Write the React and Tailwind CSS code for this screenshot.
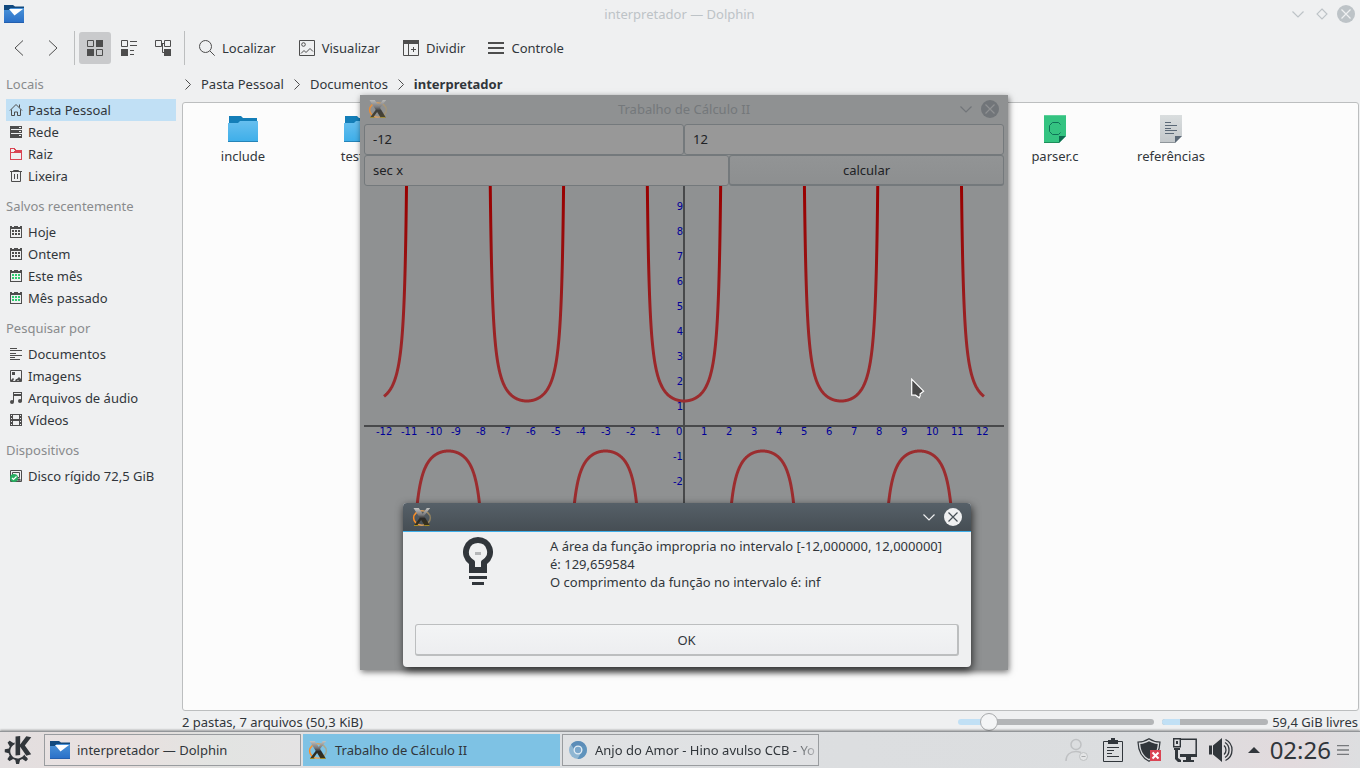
import React from "react";
import { SiKde } from "react-icons/si";

const INK = "#4d4d4d";

/* ---------- small 16px icons ---------- */

function Icon({ size = 16, children, className = "" }) {
  return (
    <svg width={size} height={size} viewBox={`0 0 ${size} ${size}`} fill="none" className={`shrink-0 ${className}`} aria-hidden="true">
      {children}
    </svg>
  );
}

const HomeIcon = () => (
  <Icon>
    <path d="M2 8.500 8 2.500l6 6M3.500 7.500v6h3v-3.500h3v3.500h3v-6M11.500 2.500v3" stroke={INK} />
  </Icon>
);
const NetworkIcon = () => (
  <Icon>
    <g shapeRendering="crispEdges">
      <path d="M2 2h12v12H2z" fill={INK} />
      <path d="M3 5h11v1H3zM3 9h11v1H3zM11 3h2v1h-2zM11 7h2v1h-2zM11 11h2v1h-2z" fill="#eff0f1" />
    </g>
  </Icon>
);
const RootIcon = () => (
  <Icon>
    <g shapeRendering="crispEdges" fill="#da4453">
      <path d="M2 2h5v1h1v1h6v10H2zM3 7v6h10V7z" fillRule="evenodd" />
      <path d="M3 3h3v1h1v1H6v1H3z" fill="#eff0f1" />
    </g>
  </Icon>
);
const TrashIcon = () => (
  <Icon>
    <path d="M2 3.500h12M5.500 3V2.500h5V3M3.500 4v9.500h9V4M6.500 6v5M9.500 6v5" stroke={INK} />
  </Icon>
);
const CalendarIcon = ({ dots = INK }) => (
  <Icon>
    <g shapeRendering="crispEdges">
      <path d="M2 2h2v1h2V2h4v1h2V2h2v12H2zM3 5v8h10V5z" fill={INK} fillRule="evenodd" />
      <path d="M4 6h2v2H4zM7 6h2v2H7zM10 6h2v2h-2zM4 9h2v2H4zM7 9h2v2H7zM10 9h2v2h-2z" fill={dots} />
    </g>
  </Icon>
);
const DocIcon = () => (
  <Icon>
    <path d="M2 2.500h7M2 4.500h12M2 7.500h6M2 9.500h12M2 11.500h5M2 13.500h10" stroke={INK} shapeRendering="crispEdges" />
  </Icon>
);
const ImageIcon = () => (
  <Icon>
    <path d="M2.500 2.500h11v11h-11z" stroke={INK} />
    <path d="M4 4h3v3H4zM3 13v-1l2-2 1 1-1 2zM7 13l1-2 1 0 2-2 2 2v2h-2l-1-1-1 1z" fill={INK} />
  </Icon>
);
const MusicIcon = () => (
  <Icon>
    <path d="M5 2h9v9.500h-1V6H6v6H5z" fill={INK} />
    <path d="M6 3h7v1H6z" fill="#eff0f1" />
    <circle cx="4" cy="12" r="2" fill={INK} />
    <circle cx="12" cy="11" r="2" fill={INK} />
  </Icon>
);
const VideoIcon = () => (
  <Icon>
    <g shapeRendering="crispEdges">
      <path d="M2 2h12v12H2z" fill={INK} />
      <path d="M5 3h6v4H5zM5 9h6v4H5zM3 3h1v1H3zM3 6h1v1H3zM3 9h1v1H3zM3 12h1v1H3zM12 3h1v1h-1zM12 6h1v1h-1zM12 9h1v1h-1zM12 12h1v1h-1z" fill="#eff0f1" />
    </g>
  </Icon>
);
const DiskIcon = () => (
  <Icon>
    <path d="M2.500 2.500h11v11h-11z" stroke={INK} />
    <path d="M4.500 4.500h7v5h-7zM8 11.500h4" stroke={INK} />
    <path d="M7 7.500h2M10 11h2v2h-2z" stroke={INK} />
    <circle cx="6" cy="10" r="4" fill="#27ae60" />
    <path d="m4 10 1.500 1.500L8.500 8.500" stroke="#fff" strokeWidth="1.200" />
  </Icon>
);

/* ---------- toolbar icons ---------- */

const BackIcon = () => (
  <Icon>
    <path d="m12 .5-8 7.500 8 7.500" stroke={INK} />
  </Icon>
);
const ForwardIcon = () => (
  <Icon>
    <path d="m4 .5 8 7.500-8 7.500" stroke={INK} />
  </Icon>
);
const GridIcon = () => (
  <Icon>
    <path d="M.5.500h6v6h-6zM9.500 9.500h6v6h-6z" stroke={INK} />
    <path d="M9 0h7v7H9zM0 9h7v7H0z" fill={INK} />
  </Icon>
);
const CompactIcon = () => (
  <Icon>
    <path d="M.5.500h6v6h-6zM9 1.500h7M9 5.500h7M9 10.500h4M9 14.500h4" stroke={INK} />
    <path d="M0 9h7v7H0z" fill={INK} />
  </Icon>
);
const TreeIcon = () => (
  <Icon>
    <path d="M.5.500h6v6h-6zM9.500.500h6v6h-6zM7 3.500h2.500M7.500 4v8.500H9" stroke={INK} />
    <path d="M9 9h7v7H9z" fill={INK} />
  </Icon>
);
const SearchIcon = () => (
  <Icon>
    <circle cx="6.500" cy="6.500" r="6" stroke={INK} />
    <path d="m11 11 4.700 4.700" stroke={INK} />
  </Icon>
);
const PreviewIcon = () => (
  <Icon>
    <path d="M.5.500h15v15H.5zM2 13.500l3-3 2 2L11 8.500l3 3" stroke={INK} />
    <circle cx="4.500" cy="4.500" r="1.800" stroke={INK} />
  </Icon>
);
const SplitIcon = () => (
  <Icon>
    <path d="M.5 1h15v14.500H.5zM5.500 3v13M8 9.500h5M10.500 7v5" stroke={INK} />
    <path d="M0 0h16v4H0z" fill={INK} />
  </Icon>
);
const MenuIcon = () => (
  <Icon>
    <path d="M0 2h16v2H0zM0 7h16v2H0zM0 12h16v2H0z" fill={INK} />
  </Icon>
);
const Crumb = () => (
  <svg width="6" height="11" viewBox="0 0 6 11" fill="none" aria-hidden="true">
    <path d="m.5.500 5 5-5 5" stroke={INK} />
  </svg>
);

/* ---------- logos and file pictures ---------- */

const DolphinLogo = ({ className }) => (
  <svg viewBox="0 0 20 18" className={className} aria-hidden="true">
    <defs>
      <linearGradient id="dolphin" x1="0" y1="0" x2="0" y2="1">
        <stop offset="0" stopColor="#4a92d8" />
        <stop offset="1" stopColor="#2a70c8" />
      </linearGradient>
    </defs>
    <path d="M0 0h9l2 1.500h9V8H0z" fill="#11497e" />
    <path d="M0 5h5l1.500-2H20v14.500H0z" fill="url(#dolphin)" />
    <path d="M0 17h20v1H0z" fill="#245fae" />
    <path d="M5 4h14l-8.500 6.500z" fill="#fff" />
  </svg>
);

const XLogo = ({ id, className = "" }) => (
  <svg width="20" height="20" viewBox="0 0 20 20" className={`shrink-0 ${className}`} aria-hidden="true">
    <defs>
      <linearGradient id={`${id}-a`} x1="0" y1="0" x2="0" y2="1">
        <stop offset="0" stopColor="#c4c4c2" />
        <stop offset=".4" stopColor="#77777a" />
        <stop offset=".6" stopColor="#2b2a28" />
        <stop offset="1" stopColor="#3a3218" />
      </linearGradient>
      <linearGradient id={`${id}-b`} x1="0" y1="0" x2="1" y2="0">
        <stop offset="0" stopColor="#ff8a1c" />
        <stop offset=".4" stopColor="#e9a35a" />
        <stop offset="1" stopColor="#b59a62" stopOpacity=".6" />
      </linearGradient>
    </defs>
    <ellipse cx="10" cy="11" rx="8.400" ry="7.200" fill="none" stroke={`url(#${id}-b)`} strokeWidth="1.500" />
    <path d="M14.800 1h3.400l-6.400 8.300-6.600 9.200H2l7-9.300z" fill={`url(#${id}-a)`} />
    <path d="M1.500 1h5.300l5 7.600 6 9.900h-5.200L8 11.300z" fill={`url(#${id}-a)`} />
    <path d="M2 18.500h4.500M12.500 18.500h5" stroke="#a38a22" />
  </svg>
);

const ChromiumLogo = () => (
  <svg width="18" height="18" viewBox="0 0 18 18" className="shrink-0" aria-hidden="true">
    <circle cx="9" cy="9" r="9" fill="#8fb6d2" />
    <path d="M9 0a9 9 0 0 1 8 5H9a4 4 0 0 0-4 3L2 3.500A9 9 0 0 1 9 0z" fill="#5c8db8" />
    <path d="M17 5a9 9 0 0 1-8.500 13L12.500 11a4 4 0 0 0-1-6z" fill="#5f93bc" />
    <circle cx="9" cy="9" r="3.800" fill="#7ba7cb" stroke="#e2edf5" strokeWidth="1.300" />
  </svg>
);

const FolderPicture = () => (
  <svg width="32" height="32" viewBox="0 0 32 32" aria-hidden="true">
    <defs>
      <linearGradient id="folder" x1="0" y1="0" x2="0" y2="1">
        <stop offset="0" stopColor="#67bfef" />
        <stop offset="1" stopColor="#3daee9" />
      </linearGradient>
    </defs>
    <path d="M2 3h12l2 2h14v7H2z" fill="#147eb8" />
    <path d="M1 10h10l2-2h18v21H1z" fill="url(#folder)" />
    <path d="M1 28h30v1H1z" fill="#2584b8" />
  </svg>
);

const SourcePicture = () => (
  <svg width="32" height="32" viewBox="0 0 32 32" fill="none" aria-hidden="true">
    <path d="M5 2h22v21l-7 7H5z" fill="#34c381" />
    <path d="M5 2h22v1H5z" fill="#5ed09b" />
    <path d="M5 29h15v1H5z" fill="#1d8f5b" />
    <path d="M20 23h7l-7 7z" fill="#0e6b50" />
    <path d="M21.500 11.500 19.500 9.500h-6l-3 3v6l3 3h6l2-2" stroke="#0f7257" />
  </svg>
);

const TextPicture = () => (
  <svg width="32" height="32" viewBox="0 0 32 32" fill="none" aria-hidden="true">
    <defs>
      <linearGradient id="sheet" x1="0" y1="0" x2="0" y2="1">
        <stop offset="0" stopColor="#dadedf" />
        <stop offset="1" stopColor="#c2c7ca" />
      </linearGradient>
    </defs>
    <path d="M5 2h22v21l-7 7H5z" fill="url(#sheet)" />
    <path d="M5 29h15v1H5z" fill="#8f969b" />
    <path d="M20 23h7l-7 7z" fill="#5b6977" />
    <path d="M10 9.500h6M10 12.500h12M10 15.500h6M10 17.500h12M10 20.500h9" stroke="#5b6977" />
  </svg>
);

/* ---------- window controls ---------- */

function WindowButton({ label, kind, disc, line }) {
  return (
    <button type="button" aria-label={label} className="flex size-[18px] items-center justify-center">
      <svg width="18" height="18" viewBox="0 0 18 18" fill="none" aria-hidden="true">
        {kind === "min" && <path d="m3.500 6.500 5.500 5.500 5.500-5.500" stroke={line} strokeWidth="1.200" />}
        {kind === "max" && <path d="M9 4l5 5-5 5-5-5z" stroke={line} strokeWidth="1.100" />}
        {kind === "close" && (
          <>
            <circle cx="9" cy="9" r="9" fill={disc} />
            <path d="m4.500 4.500 9 9m0-9-9 9" stroke={line} strokeWidth="1.200" />
          </>
        )}
      </svg>
    </button>
  );
}

/* ---------- file manager ---------- */

const PLACES = [
  {
    title: "Locais",
    items: [
      { label: "Pasta Pessoal", icon: <HomeIcon />, active: true },
      { label: "Rede", icon: <NetworkIcon /> },
      { label: "Raiz", icon: <RootIcon /> },
      { label: "Lixeira", icon: <TrashIcon /> },
    ],
  },
  {
    title: "Salvos recentemente",
    items: [
      { label: "Hoje", icon: <CalendarIcon /> },
      { label: "Ontem", icon: <CalendarIcon /> },
      { label: "Este mês", icon: <CalendarIcon dots="#2ecc71" /> },
      { label: "Mês passado", icon: <CalendarIcon dots="#2ecc71" /> },
    ],
  },
  {
    title: "Pesquisar por",
    items: [
      { label: "Documentos", icon: <DocIcon /> },
      { label: "Imagens", icon: <ImageIcon /> },
      { label: "Arquivos de áudio", icon: <MusicIcon /> },
      { label: "Vídeos", icon: <VideoIcon /> },
    ],
  },
  { title: "Dispositivos", items: [{ label: "Disco rígido 72,5 GiB", icon: <DiskIcon /> }] },
];

function ToolButton({ label, active, children }) {
  return (
    <button
      type="button"
      aria-label={label}
      className={`flex size-8 items-center justify-center rounded-[3px] ${active ? "bg-[#c9cacc]" : ""}`}
    >
      {children}
    </button>
  );
}

function TextButton({ label, icon }) {
  return (
    <button type="button" className="flex h-8 items-center gap-[7px] px-2">
      {icon}
      <span>{label}</span>
    </button>
  );
}

const Separator = () => <div className="mr-[2px] ml-[3px] h-[34px] w-px bg-[#bcbebf]" />;

function FileItem({ name, picture, className = "" }) {
  return (
    <a href="#" className={`flex flex-col items-center gap-[2px] ${className}`}>
      {picture}
      <span className="leading-[18px]">{name}</span>
    </a>
  );
}

function Dolphin() {
  return (
    <section className="flex flex-1 flex-col">
      <header className="grid h-7 grid-cols-[1fr_auto_1fr] items-center pr-[5px] pl-1">
        <DolphinLogo className="h-[18px] w-5" />
        <h1 className="text-[#bdc3c7]">interpretador — Dolphin</h1>
        <div className="flex justify-end gap-[6px]">
          <WindowButton label="Minimizar" kind="min" line="#bdc3c7" />
          <WindowButton label="Maximizar" kind="max" line="#bdc3c7" />
          <WindowButton label="Fechar" kind="close" disc="#bdc3c7" line="#eff0f1" />
        </div>
      </header>

      <div className="flex h-[41px] items-center gap-[2px] pb-px pl-[3px]">
        <ToolButton label="Voltar"><BackIcon /></ToolButton>
        <ToolButton label="Avançar"><ForwardIcon /></ToolButton>
        <Separator />
        <ToolButton label="Ícones" active><GridIcon /></ToolButton>
        <ToolButton label="Compacto"><CompactIcon /></ToolButton>
        <ToolButton label="Detalhes"><TreeIcon /></ToolButton>
        <Separator />
        <div className="flex gap-[7px] pl-[2px]">
          <TextButton label="Localizar" icon={<SearchIcon />} />
          <TextButton label="Visualizar" icon={<PreviewIcon />} />
          <TextButton label="Dividir" icon={<SplitIcon />} />
          <TextButton label="Controle" icon={<MenuIcon />} />
        </div>
      </div>

      <div className="flex flex-1">
        <nav className="flex w-[182px] shrink-0 flex-col gap-1 px-[6px]">
          {PLACES.map((group) => (
            <div key={group.title}>
              <h2 className="h-[30px] leading-[30px] text-[#898b8d]">{group.title}</h2>
              <ul>
                {group.items.map((item) => (
                  <li key={item.label}>
                    <a href="#" className={`flex h-[22px] w-[170px] items-center gap-1 pl-[2px] ${item.active ? "bg-[#c1e0f5]" : ""}`}>
                      {item.icon}
                      <span>{item.label}</span>
                    </a>
                  </li>
                ))}
              </ul>
            </div>
          ))}
        </nav>

        <main className="flex flex-1 flex-col pr-px">
          <div className="flex h-[33px] items-center gap-[10px] pb-[3px] pl-[3px]">
            <Crumb />
            <a href="#">Pasta Pessoal</a>
            <Crumb />
            <a href="#">Documentos</a>
            <Crumb />
            <a href="#" className="font-bold">interpretador</a>
          </div>
          <div className="grid flex-1 auto-cols-[116px] auto-rows-[80px] rounded-[3px] border border-[#bcbebf] bg-[#fcfcfc] pt-[10px] pl-[2px]">
            <FileItem name="include" picture={<FolderPicture />} className="col-start-1 row-start-1" />
            <FileItem name="testes" picture={<FolderPicture />} className="col-start-2 row-start-1" />
            <FileItem name="parser.c" picture={<SourcePicture />} className="col-start-8 row-start-1" />
            <FileItem name="referências" picture={<TextPicture />} className="col-start-9 row-start-1" />
          </div>
          <footer className="flex h-5 items-center pt-[2px]">
            <span className="flex-1">2 pastas, 7 arquivos (50,3 KiB)</span>
            <input
              type="range"
              aria-label="Tamanho dos ícones"
              min="0"
              max="100"
              defaultValue="12"
              className="h-[6px] w-[196px] appearance-none rounded-full bg-[linear-gradient(to_right,#c1e0f5_16%,#b3b5b7_16%)] [&::-webkit-slider-thumb]:size-[18px] [&::-webkit-slider-thumb]:appearance-none [&::-webkit-slider-thumb]:rounded-full [&::-webkit-slider-thumb]:border [&::-webkit-slider-thumb]:border-[#a8aaac] [&::-webkit-slider-thumb]:bg-[#f4f5f6]"
            />
            <div className="mr-1 ml-2 h-[6px] w-[106px] overflow-hidden rounded-full bg-[#b3b5b7]">
              <div className="h-full w-[18px] bg-[#c1e0f5]" />
            </div>
            <span className="pr-px">59,4 GiB livres</span>
          </footer>
        </main>
      </div>
    </section>
  );
}

/* ---------- plot window ---------- */

const UNIT = 25;
const ORIGIN_X = 320;
const ORIGIN_Y = 240;

function secantPath() {
  let d = "";
  let pen = false;
  let lastSign = 0;
  for (let i = -1200; i <= 1200; i++) {
    const x = i / 100;
    const y = 1 / Math.cos(x);
    const sign = Math.sign(y);
    if (Math.abs(y) > 14) {
      pen = false;
      continue;
    }
    if (sign !== lastSign) pen = false;
    d += `${pen ? "L" : "M"}${(ORIGIN_X + UNIT * x).toFixed(2)} ${(ORIGIN_Y - UNIT * y).toFixed(2)}`;
    pen = true;
    lastSign = sign;
  }
  return d;
}

const CURVE = secantPath();
const X_TICKS = Array.from({ length: 25 }, (_, i) => i - 12);
const Y_TICKS = [9, 8, 7, 6, 5, 4, 3, 2, 1, -1, -2];

function Plot() {
  return (
    <svg viewBox="0 0 640 460" className="block w-full" role="img" aria-label="Gráfico">
      <defs>
        <linearGradient id="curve" gradientUnits="userSpaceOnUse" x1="0" y1="0" x2="0" y2="220">
          <stop offset="0" stopColor="#990000" />
          <stop offset=".25" stopColor="#980b0b" />
          <stop offset=".6" stopColor="#9a2022" />
          <stop offset="1" stopColor="#9b2d2f" />
        </linearGradient>
      </defs>
      <path d={`M0 ${ORIGIN_Y}H640M${ORIGIN_X} 0V460`} stroke="#48494b" strokeWidth="2" />
      <path d={CURVE} stroke="url(#curve)" strokeWidth="3" fill="none" />
      <g fill="#000098" className="font-['DejaVu_Sans',sans-serif] text-[10px]">
        {X_TICKS.map((n) => (
          <text key={`x${n}`} x={ORIGIN_X + UNIT * n - 8} y={ORIGIN_Y + 9}>{n}</text>
        ))}
        {Y_TICKS.map((n) => (
          <text key={`y${n}`} x={ORIGIN_X - 1} y={ORIGIN_Y - UNIT * n + 9} textAnchor="end">{n}</text>
        ))}
      </g>
    </svg>
  );
}

const dimField = "h-[31px] min-w-0 rounded-[3px] border border-[#74797c] bg-[#989898] px-2 pb-[2px] text-[#202225] outline-none";

function PlotWindow() {
  return (
    <section className="absolute top-[95px] left-[360px] h-[575px] w-[648px] overflow-hidden bg-[#8f9192] px-1 shadow-[1px_2px_6px_rgba(0,0,0,0.55)]">
      <header className="mb-px grid h-7 grid-cols-[1fr_auto_1fr] items-center px-1">
        <XLogo id="plot" className="opacity-80" />
        <h2 className="text-[#74787b]">Trabalho de Cálculo II</h2>
        <div className="flex justify-end gap-[6px] pr-px">
          <WindowButton label="Minimizar" kind="min" line="#717579" />
          <WindowButton label="Fechar" kind="close" disc="#717579" line="#8f9192" />
        </div>
      </header>
      <form onSubmit={(e) => e.preventDefault()}>
        <div className="flex">
          <input aria-label="Início do intervalo" defaultValue="-12" className={`${dimField} flex-1`} />
          <input aria-label="Fim do intervalo" defaultValue="12" className={`${dimField} flex-1`} />
        </div>
        <div className="flex">
          <input aria-label="Função" defaultValue="sec x" className={`${dimField} flex-1`} />
          <button type="submit" className="h-[31px] w-[275px] rounded-[3px] border border-b-2 border-[#74797c] bg-linear-to-b from-[#929495] to-[#8d8f90] text-[#202225]">
            calcular
          </button>
        </div>
      </form>
      <Plot />
    </section>
  );
}

const Bulb = () => (
  <svg width="30" height="48" viewBox="0 0 30 48" fill="none" className="shrink-0" aria-hidden="true">
    <path
      d="M15 0a15 15 0 0 1 9 27v9H6v-9A15 15 0 0 1 15 0zm0 6a9 9 0 0 0-5 16.500c1 .500 2 1.500 2 2.500v5h6v-5c0-1 1-2 2-2.500A9 9 0 0 0 15 6z"
      fill="#31363b"
      fillRule="evenodd"
    />
    <path d="M12 15h6v3h-6z" fill="#b4b6b8" />
    <path d="M6 39h18v3H6zM9 45h12v3H9z" fill="#31363b" />
  </svg>
);

function ResultDialog() {
  return (
    <section
      role="dialog"
      aria-label="Resultado"
      className="absolute top-[503px] left-[403px] w-[568px] overflow-hidden rounded-[4px] bg-[#eff0f1] shadow-[1px_3px_8px_rgba(0,0,0,0.75)]"
    >
      <header className="flex h-[29px] items-center justify-between border-b border-[#3daee9] bg-linear-to-b from-[#566068] to-[#464e54] px-[9px]">
        <XLogo id="dialog" />
        <div className="flex gap-[6px]">
          <WindowButton label="Minimizar" kind="min" line="#eff0f1" />
          <WindowButton label="Fechar" kind="close" disc="#eff0f1" line="#475057" />
        </div>
      </header>
      <div className="flex flex-col gap-[33px] px-3 pt-[5px] pb-[11px]">
        <div className="flex gap-[57px] pl-12">
          <Bulb />
          <p className="leading-[18px]">
            A área da função impropria no intervalo [-12,000000, 12,000000]
            <br />
            é: 129,659584
            <br />
            O comprimento da função no intervalo é: inf
          </p>
        </div>
        <button type="button" className="h-8 w-full rounded-[3px] border border-r-2 border-b-2 border-[#bcbebf] bg-linear-to-b from-[#f3f4f5] to-[#edeef0]">
          OK
        </button>
      </div>
    </section>
  );
}

/* ---------- panel ---------- */

function Task({ icon, active, children }) {
  return (
    <button
      type="button"
      className={`flex h-8 w-[257px] items-center gap-[6px] pl-1 whitespace-nowrap ${
        active ? "bg-[#7ec2e4]" : "border border-[#999c9f] bg-white/10"
      }`}
    >
      {icon}
      {children}
    </button>
  );
}

const UserIcon = () => (
  <Icon size={24}>
    <circle cx="11" cy="6.500" r="5" stroke="#bfc1c3" strokeWidth="1.500" />
    <path d="M1 23c0-6 4-9.500 10-9.500 2 0 3.500.500 5 1" stroke="#bfc1c3" strokeWidth="1.500" />
    <circle cx="18.500" cy="18.500" r="4" fill="#e4e5e6" stroke="#bfc1c3" />
    <path d="M16.500 18.500h4" stroke="#a9abad" />
  </Icon>
);
const ClipboardIcon = () => (
  <Icon size={24}>
    <path d="M2.500 3.500h19v20h-19z" stroke="#31363b" />
    <path d="M7 2h3V0h4v2h3v4H7z" fill="#31363b" />
    <path d="M6 9.500h12M6 12.500h7M6 15.500h5M6 18.500h12" stroke="#31363b" />
  </Icon>
);
const ShieldIcon = () => (
  <Icon size={24}>
    <path d="M12 .7c3 2 6.500 3.200 11 3.300-.3 9-3.500 15.500-11 19.300C4.500 19.500 1.300 13 1 4 5.500 3.900 9 2.700 12 .7z" stroke="#31363b" strokeWidth="1.200" />
    <path d="M12 3.200c2.500 1.500 5.300 2.500 8.700 2.700-.4 7-3.200 12-8.700 15.100C6.500 17.900 3.700 12.900 3.300 5.900 6.700 5.700 9.500 4.700 12 3.200z" fill="#31363b" />
    <path d="M13 12h11v11H13z" fill="#da4453" />
    <path d="m15.500 14.500 6 6m0-6-6 6" stroke="#fff" strokeWidth="2" />
  </Icon>
);
const NetworkTrayIcon = () => (
  <Icon size={24}>
    <path d="M8 1.200h15.200v16.300H8" stroke="#31363b" strokeWidth="1.500" />
    <path d="M7 16h17v3H7zM13 19h5v3h3v2H10v-2h3z" fill="#31363b" />
    <path d="M.700.700h6.600v8H.7z" stroke="#31363b" strokeWidth="1.400" />
    <path d="M3 3h2v3H3zM1 10h6v2H5v8l3 2v2H5l-3-3v-9H1z" fill="#31363b" />
  </Icon>
);
const VolumeIcon = () => (
  <Icon size={24}>
    <path d="M0 7.500h3v9H0zM4 7.500 13 0v24l-9-7.500z" fill="#31363b" />
    <path d="M15 7.500c1.300 1 2 2.700 2 4.500s-.7 3.500-2 4.500M16.500 1.500C20.500 3.500 23 7.500 23 12s-2.500 8.500-6.500 10.500M16 4.500c2.500 1.500 4 4.300 4 7.500s-1.500 6-4 7.500" stroke="#31363b" strokeWidth="1.300" />
  </Icon>
);

function Panel() {
  return (
    <footer className="flex h-[37px] items-center border-t border-[#939699] bg-[linear-gradient(to_right,#e3dfe0_0%,#e6dddc_9%,#dfe1df_16%,#e3dfe2_27%,#dddfe1_40%,#dbdddf_85%,#e2dadd_95%,#dddee0_100%)] pr-[11px] pl-1 shadow-[0_-1px_2px_rgba(0,0,0,0.35)]">
      <button type="button" aria-label="Menu de aplicativos" className="flex w-[40px]">
        <SiKde className="size-[28px] text-[#31363b]" />
      </button>
      <div className="flex flex-1 gap-[2px]">
        <Task icon={<DolphinLogo className="h-[18px] w-[22px] shrink-0" />}>interpretador — Dolphin</Task>
        <Task active icon={<XLogo id="task" className="mx-px" />}>Trabalho de Cálculo II</Task>
        <Task icon={<span className="px-[2px]"><ChromiumLogo /></span>}>
          <span className="flex-1 text-left [mask-image:linear-gradient(to_right,black_88%,transparent_102%)]">
            Anjo do Amor - Hino avulso CCB - Yo
          </span>
        </Task>
      </div>
      <div className="flex items-center gap-3">
        <UserIcon />
        <ClipboardIcon />
        <ShieldIcon />
        <NetworkTrayIcon />
        <VolumeIcon />
        <svg width="12" height="6" viewBox="0 0 12 6" className="ml-[3px]" aria-hidden="true">
          <path d="M6 0l6 6H0z" fill="#31363b" />
        </svg>
        <time className="-ml-[2px] text-[24px] leading-8">02:26</time>
        <svg width="12" height="10" viewBox="0 0 12 10" className="-ml-[6px]" aria-hidden="true">
          <path d="M0 .500h12M0 5h12M0 9.500h12" stroke="#77797c" strokeWidth="1.300" />
        </svg>
      </div>
    </footer>
  );
}

const Pointer = () => (
  <svg width="16" height="22" viewBox="0 0 16 22" className="absolute top-[378px] left-[911px]" aria-hidden="true">
    <path d="M.700 1.200v16h3.800l3.800 2.600 1-2.300-.3-1.500 3.600-2.800z" fill="#4a4a4a" stroke="#fff" strokeWidth="1.200" />
  </svg>
);

export default function App() {
  return (
    <div className="relative flex min-h-screen flex-col overflow-hidden bg-[#eff0f1] font-['Noto_Sans',sans-serif] text-[13px] leading-[18px] text-[#31363b]">
      <Dolphin />
      <Panel />
      <PlotWindow />
      <ResultDialog />
      <Pointer />
    </div>
  );
}
